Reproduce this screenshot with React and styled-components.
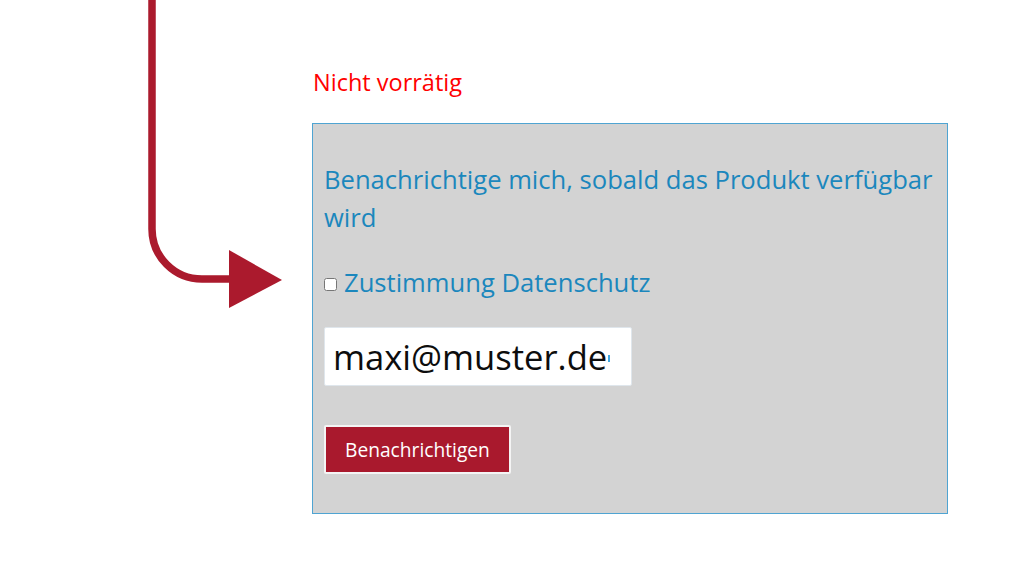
import React from "react";
import styled, { createGlobalStyle } from "styled-components";

const GlobalStyle = createGlobalStyle`
  html, body {
    margin: 0;
    padding: 0;
    background: #ffffff;
  }
  body {
    font-family: "Open Sans", "Noto Sans", sans-serif;
  }
`;

const Stage = styled.div`
  width: 1024px;
  height: 576px;
  display: flex;
  overflow: hidden;
  background: #ffffff;
`;

const ArrowCol = styled.div`
  width: 312px;
  flex: 0 0 312px;
  height: 576px;
  svg {
    display: block;
  }
`;

const Content = styled.div`
  display: flex;
  flex-direction: column;
  padding-top: 65px;
`;

const Stock = styled.p`
  margin: 0 0 0 1px;
  color: #ff0000;
  font-size: 23.5px;
  line-height: 35px;
`;

const NotifyBox = styled.form`
  box-sizing: border-box;
  width: 636px;
  height: 391px;
  margin-top: 23px;
  padding: 37px 11px 0 11px;
  background: #d3d3d3;
  border: 1px solid #4fa4d2;
  display: flex;
  flex-direction: column;
  align-items: flex-start;
`;

const Heading = styled.p`
  margin: 0;
  color: #1b87bd;
  font-size: 25.6px;
  line-height: 38.4px;
`;

const ConsentRow = styled.label`
  display: flex;
  align-items: center;
  gap: 7px;
  margin-top: 26px;
  color: #1b87bd;
  font-size: 25.6px;
  line-height: 38.4px;
`;

const Check = styled.input`
  width: 13px;
  height: 13px;
  margin: 3px 0 0 0;
`;

const EmailField = styled.div`
  box-sizing: border-box;
  width: 308px;
  height: 59px;
  margin-top: 25px;
  padding: 0 8px;
  background: #ffffff;
  border: 1px solid #dfe6ec;
  border-radius: 2px;
  display: flex;
  align-items: center;
  color: #0d0d0d;
  font-size: 34.6px;
  white-space: nowrap;
  overflow: hidden;
`;

const Caret = styled.span`
  display: inline-block;
  flex: 0 0 2px;
  width: 2px;
  height: 7px;
  margin: 4px 0 0 1px;
  background: #3fa6e0;
`;

const SubmitButton = styled.button`
  box-sizing: border-box;
  height: 49px;
  margin-top: 39px;
  padding: 0 19px;
  background: #a9192d;
  color: #ffffff;
  border: 2px solid #f4f4f4;
  border-radius: 2px;
  font-family: "Open Sans", "Noto Sans", sans-serif;
  font-size: 19.2px;
  cursor: pointer;
`;

const FlowArrow = () => (
  <svg width="312" height="576" viewBox="0 0 312 576">
    <path
      d="M152 0 V229 A50 50 0 0 0 202 279 H236"
      fill="none"
      stroke="#ab1a2d"
      strokeWidth="7.5"
    />
    <polygon points="229,250 282,280 229,308" fill="#ab1a2d" />
  </svg>
);

export default function App() {
  return (
    <>
      <GlobalStyle />
      <Stage>
        <ArrowCol>
          <FlowArrow />
        </ArrowCol>
        <Content>
          <Stock>Nicht vorrätig</Stock>
          <NotifyBox onSubmit={(e) => e.preventDefault()}>
            <Heading>Benachrichtige mich, sobald das Produkt verfügbar wird</Heading>
            <ConsentRow>
              <Check type="checkbox" />
              Zustimmung Datenschutz
            </ConsentRow>
            <EmailField>
              maxi@muster.de
              <Caret />
            </EmailField>
            <SubmitButton type="submit">Benachrichtigen</SubmitButton>
          </NotifyBox>
        </Content>
      </Stage>
    </>
  );
}
